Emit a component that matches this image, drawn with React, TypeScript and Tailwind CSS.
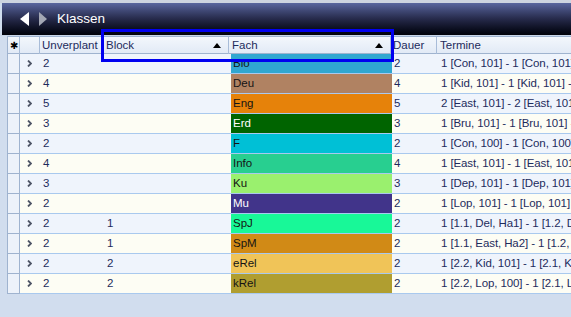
const rows = [
  { fach: 'Bio', color: 'bg-[#30a7d1]', light: false, unv: '2', block: '', dauer: '2', termine: '1 [Con, 101] - 1 [Con, 101]' },
  { fach: 'Deu', color: 'bg-[#b08262]', light: false, unv: '4', block: '', dauer: '4', termine: '1 [Kid, 101] - 1 [Kid, 101] - 1 [Kid, 101]' },
  { fach: 'Eng', color: 'bg-[#e6820a]', light: false, unv: '5', block: '', dauer: '5', termine: '2 [East, 101] - 2 [East, 101] - 1 [East, 101]' },
  { fach: 'Erd', color: 'bg-[#006400]', light: true, unv: '3', block: '', dauer: '3', termine: '1 [Bru, 101] - 1 [Bru, 101] - 1 [Bru, 101]' },
  { fach: 'F', color: 'bg-[#00c0d6]', light: false, unv: '2', block: '', dauer: '2', termine: '1 [Con, 100] - 1 [Con, 100]' },
  { fach: 'Info', color: 'bg-[#28cf90]', light: false, unv: '4', block: '', dauer: '4', termine: '1 [East, 101] - 1 [East, 101] - 1 [East, 101]' },
  { fach: 'Ku', color: 'bg-[#9af06e]', light: false, unv: '3', block: '', dauer: '3', termine: '1 [Dep, 101] - 1 [Dep, 101]' },
  { fach: 'Mu', color: 'bg-[#41348a]', light: true, unv: '2', block: '', dauer: '2', termine: '1 [Lop, 101] - 1 [Lop, 101]' },
  { fach: 'SpJ', color: 'bg-[#18f898]', light: false, unv: '2', block: '1', dauer: '2', termine: '1 [1.1, Del, Ha1] - 1 [1.2, Del, Ha1]' },
  { fach: 'SpM', color: 'bg-[#d18a16]', light: false, unv: '2', block: '1', dauer: '2', termine: '1 [1.1, East, Ha2] - 1 [1.2, East, Ha2]' },
  { fach: 'eRel', color: 'bg-[#f0c458]', light: false, unv: '2', block: '2', dauer: '2', termine: '1 [2.2, Kid, 101] - 1 [2.1, Kid, 101]' },
  { fach: 'kRel', color: 'bg-[#b09e30]', light: false, unv: '2', block: '2', dauer: '2', termine: '1 [2.2, Lop, 100] - 1 [2.1, Lop, 100]' },
];

const cols = 'grid grid-cols-[12px_20px_63px_126px_162px_46px_1fr]';

function SortUp() {
  return (
    <svg width="8" height="5" viewBox="0 0 8 5" className="mr-[7px]">
      <polygon points="0,5 8,5 4,0" fill="#000" />
    </svg>
  );
}

function Chevron() {
  return (
    <svg width="5" height="7" viewBox="0 0 5 7">
      <polyline points="1,0.5 4,3.5 1,6.5" fill="none" stroke="#4e5566" strokeWidth="1.8" />
    </svg>
  );
}

export default function App() {
  return (
    <div className="relative w-[571px] h-[317px] overflow-hidden bg-[#d1ddee] text-[11.5px] text-[#1d2b5c]" style={{ fontFamily: '"Liberation Sans", Arial, sans-serif' }}>
      {/* Title bar */}
      <div className="h-[3px] bg-[#cdd4e0]" />
      <div className="ml-[2px] h-[32px] bg-gradient-to-b from-[#59669f] via-[#262a4a] to-[#02030a] flex items-center">
        <svg width="9" height="14" viewBox="0 0 9 14" className="ml-[18px]">
          <polygon points="9,0 9,14 0,7" fill="#ffffff" />
        </svg>
        <svg width="8" height="14" viewBox="0 0 8 14" className="ml-[10px]">
          <polygon points="0,0 0,14 8,7" fill="#a3a7b4" />
        </svg>
        <span className="ml-[10px] text-white text-[13.5px]">Klassen</span>
      </div>
      <div className="h-[1px] bg-[#c9d6e8]" />

      <div className="flex">
        <div className="w-[8px] shrink-0 border-r border-[#9fb3cf]" />
        <div className="flex-1">
          {/* Header */}
          <div className={`${cols} h-[18px] bg-gradient-to-b from-[#f3f7fc] to-[#e2eaf6] border-y border-[#9fb3cf]`}>
            <div className="flex items-center justify-center border-r border-[#a8bcd8] text-[10px] text-black leading-none">✱</div>
            <div className="border-r border-[#a8bcd8]" />
            <div className="flex items-center pl-[2px] border-r border-[#a8bcd8] whitespace-nowrap overflow-hidden">Unverplant</div>
            <div className="flex items-center justify-between pl-[3px] border-r border-[#a8bcd8]">Block<SortUp /></div>
            <div className="flex items-center justify-between pl-[3px] border-r border-[#a8bcd8]">Fach<SortUp /></div>
            <div className="flex items-center pl-[2px] border-r border-[#a8bcd8]">Dauer</div>
            <div className="flex items-center pl-[3px]">Termine</div>
          </div>

          {/* Rows */}
          {rows.map((r, i) => (
            <div key={r.fach} className={`${cols} h-[20px] border-b border-[#a9c9ee] ${i % 2 === 0 ? 'bg-[#eff4fc]' : 'bg-[#fdfdf4]'}`}>
              <div className="bg-[#edf2fa] border-r border-[#9fb3cf] -mb-px border-b border-b-[#9fb3cf]" />
              <div className="flex items-center pl-[7px]"><Chevron /></div>
              <div className="flex items-center pl-[3px]">{r.unv}</div>
              <div className="flex items-center pl-[4px]">{r.block}</div>
              <div className={`flex items-center pl-[2px] ml-[2px] -mr-px ${r.color} ${r.light ? 'text-white' : 'text-[#141414]'}`}>{r.fach}</div>
              <div className="flex items-center pl-[3px]">{r.dauer}</div>
              <div className="flex items-center pl-[4px] whitespace-nowrap overflow-hidden tracking-[-0.1px]">{r.termine}</div>
            </div>
          ))}
        </div>
      </div>

      {/* Highlight box */}
      <div className="absolute left-[101px] top-[29px] w-[293px] h-[33px] border-[3px] border-[#0000f0]" />
    </div>
  );
}
